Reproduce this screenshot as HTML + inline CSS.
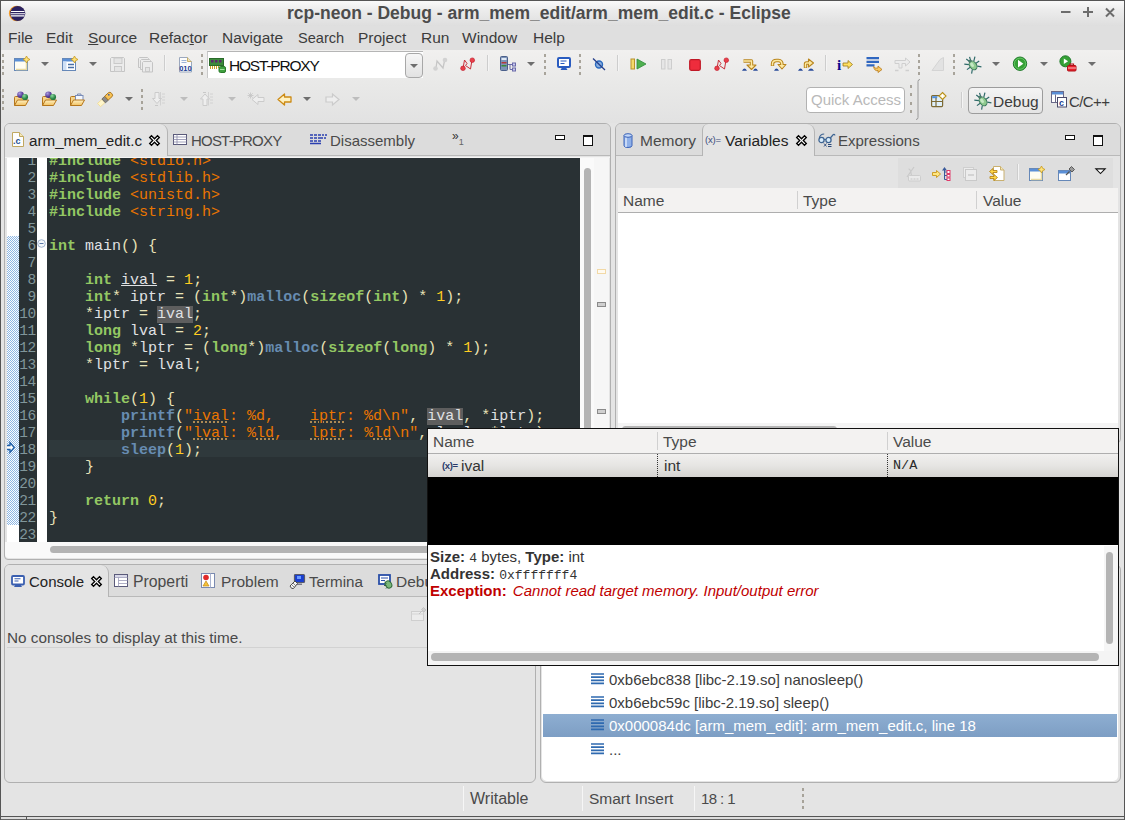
<!DOCTYPE html>
<html><head><meta charset="utf-8"><title>Eclipse</title>
<style>
*{box-sizing:border-box;margin:0;padding:0}
html,body{width:1125px;height:820px;overflow:hidden;background:#e4e4e4;font-family:"Liberation Sans",sans-serif;color:#3c3c3c}
.a{position:absolute}
.t{position:absolute;white-space:nowrap;line-height:1}
#titlebar{left:0;top:0;width:1125px;height:26px;background:linear-gradient(#fbfbfb,#ececec 40%,#dedede)}
#menubar{left:0;top:26px;width:1125px;height:24px;background:#dfdfdf}
.m{font-size:15.5px;top:30px;color:#3c3c3c}
.tab{font-size:15.5px;color:#4a4a4a}
.mono{font-family:"Liberation Mono",monospace}

.dd{position:absolute;width:0;height:0;border-left:4px solid transparent;border-right:4px solid transparent;border-top:4.500px solid #6e6e6e}
.dl{border-top-color:#bdbdbd}
.hd{position:absolute;margin-left:-1px;width:2px;height:22px;background:repeating-linear-gradient(#9c978c 0 3px,transparent 3px 6px);opacity:.85}
.sp{position:absolute;width:1px;height:16px;background:#cdcdcd;box-shadow:1px 0 0 #f4f4f4}
svg{position:absolute;overflow:visible}

.panel{position:absolute;border:1px solid #b0b0b0;border-radius:6px 6px 4px 4px;background:#e4e4e4}
.tabbar{position:absolute;background:#dcdcdc;border-bottom:1px solid #b9b9b9}
.code{position:absolute;left:49px;top:153px;font-family:"Liberation Mono",monospace;font-size:15px;line-height:17px;color:#e0e2e4;white-space:pre}
.code div{height:17px}
.k{color:#93c763;font-weight:bold}.s{color:#ec7600}.n{color:#ffcd22}.o{color:#e8e2b7}.f{color:#678cb1;font-weight:bold}
.oc{background:#5e5e5e}
.ln{position:absolute;left:19px;top:153px;width:17px;font-family:"Liberation Mono",monospace;font-size:14.5px;line-height:17px;color:#81969a;text-align:right;letter-spacing:-0.3px}
.ln div{height:17px}
.sq{text-decoration:underline dotted #d9a860;text-underline-offset:2px}
.hdr{font-size:15.5px;color:#4a4a4a}
</style></head><body>
<!-- window frame -->
<div class="a" id="titlebar"></div>
<div class="t" style="left:287px;top:4.500px;font-size:17.5px;font-weight:bold;color:#4c4c4c">rcp-neon - Debug - arm_mem_edit/arm_mem_edit.c - Eclipse</div>
<svg style="left:8px;top:5px" width="18" height="17" viewBox="0 0 18 17"><circle cx="8.700" cy="8.500" r="7.800" fill="#f49b27"/><circle cx="9.700" cy="8.500" r="7.600" fill="#2c2260"/><path d="M3 6.500h13.500M2.500 8.700h14.500M3 10.900h13.500" stroke="#fff" stroke-width="1.100"/></svg>
<svg style="left:1061px;top:7px" width="54" height="11" viewBox="0 0 54 11"><path d="M0 5h9.500M27 0v10M22 5h10M45 1.500l8 8M53 1.500l-8 8" stroke="#6c6c6c" stroke-width="2" fill="none"/></svg>
<div class="a" id="menubar"></div>
<div class="t m" style="left:8px">File</div>
<div class="t m" style="left:46px">Edit</div>
<div class="t m" style="left:88px"><u>S</u>ource</div>
<div class="t m" style="left:149px">Refac<u>t</u>or</div>
<div class="t m" style="left:222px">Navigate</div>
<div class="t m" style="left:298px;font-size:14.600px;top:30.500px">Search</div>
<div class="t m" style="left:358px">Project</div>
<div class="t m" style="left:421px">Run</div>
<div class="t m" style="left:462px">Window</div>
<div class="t m" style="left:533px">Help</div>
<!--TOOLBAR-->
<div class="a" style="left:1px;top:50px;width:1124px;height:73px;background:linear-gradient(#f1f0ef,#e9e9e8 45%,#e2e2e2)"></div>
<div class="hd" style="left:3px;top:54px"></div>
<svg style="left:14px;top:56px" width="16" height="16" viewBox="0 0 16 16"><rect x=".5" y="2.5" width="13" height="12" fill="#fffdf2" stroke="#6688b8"/><rect x="1" y="3" width="12" height="2.5" fill="#5b8fd6"/><path d="M2 13.5h10.500v-7" fill="none" stroke="#e8d9a0" stroke-width="1.5"/><path d="M12.500 0l1.200 2.300 2.300 1.200-2.300 1.200-1.200 2.300-1.200-2.300-2.300-1.200 2.300-1.200z" fill="#ffe27a" stroke="#c99a1c" stroke-width=".8"/></svg>
<div class="dd" style="left:41px;top:62px"></div>
<svg style="left:62px;top:56px" width="16" height="16" viewBox="0 0 16 16"><rect x=".5" y="2.500" width="13" height="12" fill="#fff" stroke="#6688b8"/><rect x="1" y="3" width="12" height="2.500" fill="#5b8fd6"/><rect x="1" y="5.500" width="3.500" height="8.500" fill="#cfe0f5"/><path d="M6 8.500h6M6 11.500h6" stroke="#4a6fa5" stroke-width="1.300"/><path d="M12.500 0l1.200 2.300 2.300 1.200-2.300 1.200-1.200 2.300-1.200-2.300-2.300-1.200 2.300-1.200z" fill="#ffe27a" stroke="#c99a1c" stroke-width=".8"/></svg>
<div class="dd" style="left:89px;top:62px"></div>
<svg style="left:110px;top:57px" width="16" height="16" viewBox="0 0 16 16"><path d="M1.500 .5h12l1 1v13h-14v-13z" fill="#ececec" stroke="#c4c4c4"/><rect x="4" y="1" width="8" height="5.500" fill="#e4e4e4" stroke="#c9c9c9"/><rect x="4.500" y="9.500" width="7" height="5" fill="#e4e4e4" stroke="#c9c9c9"/></svg>
<svg style="left:138px;top:57px" width="16" height="16" viewBox="0 0 16 16"><path d="M1.500 .5h8l1 1v9h-10v-9z" fill="#ececec" stroke="#c4c4c4"/><path d="M3.500 2.500h8l1 1v9h-10v-9z" fill="#ececec" stroke="#c4c4c4"/><path d="M5.500 4.500h8l1 1v9.500h-10v-9.500z" fill="#ececec" stroke="#c4c4c4"/><rect x="7.500" y="10.500" width="4" height="4" fill="#e4e4e4" stroke="#c9c9c9"/></svg>
<div class="sp" style="left:164px;top:55px"></div>
<svg style="left:178px;top:57px" width="16" height="16" viewBox="0 0 16 16"><path d="M1.500 .5h8l4 4v10.500h-12z" fill="#fcfcfc" stroke="#9aa7bd"/><path d="M9.500 .5v4h4" fill="#f3e3b0" stroke="#c9b06a"/><path d="M3.500 3.500h5M3.500 5.500h5" stroke="#9fb6d8"/><text x="1.200" y="14" font-family="Liberation Sans,sans-serif" font-weight="bold" font-size="7.500" fill="#1c3f94">010</text></svg>
<div class="hd" style="left:202px;top:54px"></div>
<div class="a" style="left:207px;top:51px;width:216px;height:27px;background:#fff;border-top:1px solid #b5b5b5;border-left:1px solid #c8c8c8"></div>
<svg style="left:209px;top:58px" width="17" height="15" viewBox="0 0 17 15"><rect x=".5" y=".5" width="14" height="7" fill="#3c8a3c" stroke="#2a6a2a"/><rect x="2" y="2" width="2.500" height="2.500" fill="#5a2a6a"/><rect x="6" y="2" width="2.500" height="2.500" fill="#5a2a6a"/><rect x="10" y="2" width="2.500" height="2.500" fill="#5a2a6a"/><path d="M1.500 8v3M3.500 8v3M5.500 8v3M7.500 8v3M9.500 8v2" stroke="#c9a227"/><rect x="10" y="8.500" width="6.500" height="6" rx="1.500" fill="#3fa03f" stroke="#2a7a2a"/><path d="M11 11.500h4.500" stroke="#9fe09f"/></svg>
<div class="t" style="left:229px;top:58px;font-size:15.5px;letter-spacing:-1.2px;color:#111">HOST-PROXY</div>
<div class="a" style="left:405px;top:53px;width:18px;height:25px;border:1px solid #a8a8a8;border-radius:4px;background:linear-gradient(#f6f6f6,#e2e2e2)"></div>
<div class="dd" style="left:410px;top:64px"></div>
<svg style="left:433px;top:57px" width="16" height="16" viewBox="0 0 16 16"><path d="M3 11l1-7 6 7 1.500-7" fill="none" stroke="#c6c6c6" stroke-width="1.300"/><circle cx="12" cy="3" r="2.300" fill="#d2d2d2"/><circle cx="2.500" cy="11.500" r="2.300" fill="#d2d2d2"/></svg>
<svg style="left:460px;top:57px" width="16" height="16" viewBox="0 0 16 16"><path d="M3 11.500L4.500 3l2.500 3.500-1.500 2 5 3.500L12 3" fill="none" stroke="#c8303a" stroke-width="1"/><circle cx="12.300" cy="3.200" r="2.300" fill="#e8404a" stroke="#c01828" stroke-width=".6"/><circle cx="3" cy="11.300" r="2.300" fill="#e8404a" stroke="#c01828" stroke-width=".6"/></svg>
<div class="sp" style="left:487px;top:55px"></div>
<svg style="left:500px;top:56px" width="17" height="16" viewBox="0 0 17 16"><rect x=".5" y=".5" width="7" height="14" rx="1" fill="#7d94b8" stroke="#4a5f8a"/><rect x="1.500" y="2" width="5" height="2" fill="#dfe8f5"/><rect x="1.500" y="6" width="5" height="1.500" fill="#b43a3a"/><rect x="1.500" y="9" width="5" height="1.500" fill="#3a8a3a"/><path d="M8 8.500h4M10 8.500v5h2" fill="none" stroke="#6a6aa8"/><rect x="12.500" y="7" width="3" height="3" fill="#c8c8f0" stroke="#6a6aa8"/><rect x="12.500" y="12" width="3" height="3" fill="#c8c8f0" stroke="#6a6aa8"/></svg>
<div class="dd" style="left:527px;top:62px"></div>
<div class="hd" style="left:545px;top:54px"></div>
<svg style="left:557px;top:57px" width="14" height="14" viewBox="0 0 14 14"><rect x="1" y="1" width="12" height="9" rx="1" fill="#fff" stroke="#2a5cc0" stroke-width="2"/><path d="M3.500 4h6M3.500 6.500h4" stroke="#2a5cc0" stroke-width="1.200"/><path d="M5 10.500h4l1.500 2.500h-7z" fill="#2a5cc0"/></svg>
<div class="hd" style="left:580px;top:54px"></div>
<svg style="left:592px;top:57px" width="14" height="14" viewBox="0 0 14 14"><circle cx="7" cy="7.500" r="3.500" fill="#8ab0e0" stroke="#2a6abf" stroke-width="1.400"/><path d="M1 1.500l12 11.500" stroke="#27408b" stroke-width="1.300"/></svg>
<div class="sp" style="left:617px;top:55px"></div>
<svg style="left:630px;top:58px" width="17" height="12" viewBox="0 0 17 12"><rect x="1" y="1" width="3.500" height="10" fill="#f5d96a" stroke="#b8922a"/><path d="M7 1l9 5-9 5z" fill="#4fb04f" stroke="#2f8a3a" stroke-width=".8"/></svg>
<svg style="left:660px;top:58px" width="13" height="12" viewBox="0 0 13 12"><rect x="1.500" y="1.500" width="3.500" height="9.500" fill="#e6e6e6" stroke="#cdcdcd"/><rect x="8" y="1.500" width="3.500" height="9.500" fill="#e6e6e6" stroke="#cdcdcd"/></svg>
<svg style="left:689px;top:59px" width="12" height="12" viewBox="0 0 12 12"><rect x=".7" y=".7" width="10.600" height="10.600" rx="1.500" fill="#ee2c3c" stroke="#c01826" stroke-width="1.200"/></svg>
<svg style="left:714px;top:57px" width="16" height="16" viewBox="0 0 16 16"><path d="M3 11.500L4.500 3l2.500 3.500-1.500 2 5 3.500L12 3" fill="none" stroke="#c8303a" stroke-width="1"/><circle cx="12.300" cy="3.200" r="2.300" fill="#e8404a" stroke="#c01828" stroke-width=".6"/><circle cx="3" cy="11.300" r="2.300" fill="#e8404a" stroke="#c01828" stroke-width=".6"/></svg>
<svg style="left:742px;top:58px" width="17" height="13" viewBox="0 0 17 13"><path d="M1.500 3H9.500V7.500" fill="none" stroke="#b9851c" stroke-width="3.400" stroke-linejoin="round"/><path d="M5 7h9l-4.500 4.500z" fill="#fde9a2" stroke="#b9851c" stroke-width="1.100" stroke-linejoin="round"/><path d="M1.500 3H9.500V8" fill="none" stroke="#fde9a2" stroke-width="1.400"/><path d="M0 12.800q2.500-4.500 5 0zM11 12.800q2.500-4.500 5 0z" fill="#2a4c9a"/></svg>
<svg style="left:770px;top:58px" width="17" height="13" viewBox="0 0 17 13"><path d="M2.500 8V6Q2.500 2.500 6.500 2.500H8.500Q12 2.500 12 6.500" fill="none" stroke="#b9851c" stroke-width="3.400" stroke-linecap="butt"/><path d="M8 6.500h8l-4 4.500z" fill="#fde9a2" stroke="#b9851c" stroke-width="1.100" stroke-linejoin="round"/><path d="M2.500 7.500V6Q2.500 2.500 6.500 2.500H8.500Q12 2.500 12 7" fill="none" stroke="#fde9a2" stroke-width="1.400"/><path d="M4 12.800q2.500-4.500 5 0z" fill="#2a4c9a"/></svg>
<svg style="left:798px;top:58px" width="17" height="13" viewBox="0 0 17 13"><path d="M7.500 10V6Q7.500 5 8.500 5H11" fill="none" stroke="#b9851c" stroke-width="3.400"/><path d="M10.500 1l5 4-5 4z" fill="#fde9a2" stroke="#b9851c" stroke-width="1.100" stroke-linejoin="round"/><path d="M7.500 9.500V6Q7.500 5 8.500 5H11.500" fill="none" stroke="#fde9a2" stroke-width="1.400"/><path d="M0 12.800q2.500-4.500 5 0zM10 12.800q3-4.500 6 0z" fill="#2a4c9a"/></svg>
<div class="sp" style="left:825px;top:55px"></div>
<svg style="left:837px;top:57px" width="17" height="14" viewBox="0 0 17 14"><text x="0" y="12.500" font-family="Liberation Serif,serif" font-weight="bold" font-size="15" fill="#0a0a8c">i</text><path d="M6 6h5v-2.500l4.500 4-4.500 4v-2.500h-5z" fill="#ffe060" stroke="#9a7a1a" stroke-width=".8"/></svg>
<svg style="left:866px;top:56px" width="17" height="16" viewBox="0 0 17 16"><path d="M.5 2.200h12.500M.5 5.800h12.500M.5 9.400h8" stroke="#2f66c0" stroke-width="2.300"/><path d="M7.500 10.500q2 2.500 4.500 1.500v-2l4 3.500-4 3v-2q-3.500 1-4.500-4z" fill="#f8c860" stroke="#b8791a" stroke-width=".8"/></svg>
<svg style="left:894px;top:57px" width="17" height="15" viewBox="0 0 17 15"><path d="M1 3.500h10.500v-2.500l4.500 4-4.500 4v-2.500h-3.500v4.500h-3v-4.500h-4z" fill="#ececec" stroke="#cfcfcf"/><path d="M1 13.500h3.500M11.500 13.500h3.500" stroke="#cfcfcf" stroke-width="1.300"/></svg>
<div class="hd" style="left:919px;top:54px"></div>
<svg style="left:931px;top:57px" width="15" height="15" viewBox="0 0 15 15"><path d="M1 13.500l8-11 3.500-2v13z" fill="#e2e2e2" stroke="#d4d4d4"/></svg>
<div class="hd" style="left:954px;top:54px"></div>
<svg style="left:964px;top:56px" width="17" height="17" viewBox="0 0 17 17"><g transform="rotate(-35 8.500 8.500)"><path d="M2 3.500l3.500 3M15 3.500l-3.500 3M1 9.500h4M16 9.500h-4M2.500 15.500l3-3M14.500 15.500l-3-3M6.500 .5l1.200 3.500M10.500 .5l-1.200 3.500" stroke="#2f6a6a" stroke-width="1.200" fill="none"/><ellipse cx="8.500" cy="9.500" rx="3.400" ry="4.800" fill="#8fca8f" stroke="#3a7a5a"/><ellipse cx="8" cy="8.500" rx="1.500" ry="2.500" fill="#c4e8c4"/><ellipse cx="8.500" cy="4.300" rx="1.800" ry="1.400" fill="#4a7a6a"/></g></svg>
<div class="dd" style="left:992px;top:62px"></div>
<svg style="left:1012px;top:56px" width="16" height="16" viewBox="0 0 16 16"><circle cx="8" cy="7.700" r="6.700" fill="#35a035" stroke="#1f7a2a"/><circle cx="8" cy="7.700" r="5.600" fill="none" stroke="#6fcf6f" stroke-width=".8"/><path d="M6 3.800l5.300 3.900-5.300 3.900z" fill="#fff"/></svg>
<div class="dd" style="left:1040px;top:62px"></div>
<svg style="left:1059px;top:55px" width="18" height="17" viewBox="0 0 18 17"><circle cx="6.400" cy="6.300" r="5.500" fill="#35a035" stroke="#1f7a2a"/><path d="M4.800 3.500l4.300 2.800-4.300 2.800z" fill="#fff"/><rect x="8.500" y="10.500" width="8.500" height="5.500" rx="1" fill="#e8202a" stroke="#b01018"/><path d="M11 10.500v-1.500h3.500v1.500" fill="none" stroke="#b01018" stroke-width="1.200"/><path d="M9 13h8" stroke="#ffd0d0" stroke-width=".9"/></svg>
<div class="dd" style="left:1088px;top:62px"></div>
<!--ROW2-->
<div class="hd" style="left:3px;top:89px"></div>
<svg style="left:13px;top:91px" width="17" height="16" viewBox="0 0 17 16"><defs><linearGradient id="fg" x1="0" y1="0" x2="0" y2="1"><stop offset="0" stop-color="#fff1c4"/><stop offset="1" stop-color="#f1c160"/></linearGradient><radialGradient id="pb" cx=".35" cy=".3" r=".8"><stop offset="0" stop-color="#a99be0"/><stop offset=".6" stop-color="#5a3f9a"/><stop offset="1" stop-color="#3a2870"/></radialGradient><radialGradient id="gb" cx=".35" cy=".3" r=".8"><stop offset="0" stop-color="#8fd8a0"/><stop offset=".6" stop-color="#2f8a4a"/><stop offset="1" stop-color="#1f6a35"/></radialGradient></defs><path d="M1.500 14.500V6.500Q1.500 5.500 2.500 5.500H6L7.500 7H12.500V9.500" fill="#f7d488" stroke="#b5761c"/><path d="M1.500 14.500L4.500 9H15.500L12.500 14.500Z" fill="url(#fg)" stroke="#b5761c" stroke-linejoin="round"/><circle cx="7.500" cy="3.800" r="3.300" fill="url(#pb)"/><circle cx="12" cy="6" r="3.100" fill="url(#gb)"/></svg>
<svg style="left:41px;top:91px" width="17" height="16" viewBox="0 0 17 16"><path d="M1.500 14.500V6.500Q1.500 5.500 2.500 5.500H6L7.500 7H12.500V9.500" fill="#f7d488" stroke="#b5761c"/><path d="M1.500 14.500L4.500 9H15.500L12.500 14.500Z" fill="url(#fg)" stroke="#b5761c" stroke-linejoin="round"/><circle cx="7.500" cy="3.800" r="3.300" fill="url(#pb)"/><circle cx="12" cy="6" r="3.100" fill="url(#gb)"/></svg>
<svg style="left:69px;top:91px" width="17" height="16" viewBox="0 0 17 16"><path d="M1.500 14.500V6.500Q1.500 5.500 2.500 5.500H6L7.500 7H12.500V9.500" fill="#f7d488" stroke="#b5761c"/><rect x="6.500" y="4.500" width="7.500" height="5" fill="#f4f7fd" stroke="#7a8db8"/><path d="M8.500 4.500v-1.500h3.500v1.500" fill="none" stroke="#7a8db8"/><path d="M1.500 14.500L4.500 9H15.500L12.500 14.500Z" fill="url(#fg)" stroke="#b5761c" stroke-linejoin="round"/></svg>
<svg style="left:97px;top:90px" width="17" height="17" viewBox="0 0 17 17"><g transform="translate(0 .5) rotate(-42 8.500 8.500) translate(1 1) scale(.88)"><path d="M-1.500 6.200h7v5h-7z" fill="#fff6cc" stroke="#f0d98a" stroke-width=".8"/><rect x="5.500" y="5.700" width="4.500" height="6" fill="#8a8a8a" stroke="#5a5a5a" stroke-width=".8"/><path d="M10 5.500h6q2 0 2 3t-2 3h-6z" fill="#f7c255" stroke="#a8721a"/><circle cx="14.500" cy="7.500" r=".9" fill="#2a4fa8"/></g></svg>
<div class="dd" style="left:125px;top:97px"></div>
<div class="hd" style="left:142px;top:89px"></div>
<svg style="left:152px;top:91px" width="15" height="16" viewBox="0 0 15 16"><path d="M8.500 1v13.500M10 3h3M10 6h3M10 9h3M10 12h3" stroke="#d2d2d2"/><path d="M3 1.500h4v6h2.500l-4.500 5-4.500-5h2.500z" fill="#eee" stroke="#cbcbcb"/><path d="M3 14.500h3" stroke="#c8c8c8"/></svg>
<div class="dd dl" style="left:180px;top:97px"></div>
<svg style="left:200px;top:91px" width="15" height="16" viewBox="0 0 15 16"><path d="M8.500 1v13.500M10 3h3M10 6h3M10 9h3M10 12h3" stroke="#d2d2d2"/><path d="M3 14.500h4v-6.500h2.500l-4.500-5-4.500 5h2.500z" fill="#eee" stroke="#cbcbcb"/><path d="M3 1.500h3" stroke="#c8c8c8"/></svg>
<div class="dd dl" style="left:228px;top:97px"></div>
<svg style="left:247px;top:92px" width="18" height="14" viewBox="0 0 18 14"><path d="M17 5.500h-6v-3l-6 5 6 5v-3h6z" fill="#eee" stroke="#cbcbcb"/><path d="M3.500 .5v6M.5 3.500h6M1.300 1.300l4.400 4.400M5.700 1.300l-4.400 4.400" stroke="#c4c4c4" stroke-width=".8"/></svg>
<svg style="left:277px;top:93px" width="15" height="13" viewBox="0 0 15 13"><path d="M14 4h-6.500v-3l-6.500 5.500 6.500 5.500v-3h6.500z" fill="#fff1c0" stroke="#cc8a14" stroke-width="1.300" stroke-linejoin="round"/></svg>
<div class="dd" style="left:303px;top:97px"></div>
<svg style="left:325px;top:93px" width="15" height="13" viewBox="0 0 15 13"><path d="M1 4h6.500v-3l6.500 5.500-6.500 5.500v-3h-6.500z" fill="#eee" stroke="#cbcbcb" stroke-width="1.200"/></svg>
<div class="dd dl" style="left:352px;top:97px"></div>
<div class="a" style="left:806px;top:87px;width:99px;height:26px;background:#fff;border:1px solid #b2b2b2;border-radius:4px"></div>
<div class="t" style="left:811px;top:92px;font-size:15px;color:#b9b9b9">Quick Access</div>
<div class="hd" style="left:911px;top:85px;height:29px;background:repeating-linear-gradient(#9c978c 0 3px,transparent 3px 8.300px)"></div>
<svg style="left:915px;top:79px" width="6" height="41" viewBox="0 0 6 41"><path d="M5 .5q-2 0-2 2v36q0 2-2 2" fill="none" stroke="#9a9a9a" stroke-width="1"/></svg>
<svg style="left:931px;top:92px" width="16" height="16" viewBox="0 0 16 16"><rect x=".6" y="3.600" width="11" height="11" rx="1" fill="#dff0fc" stroke="#7d6a35" stroke-width="1.200"/><rect x="1.200" y="4.200" width="5" height="2" fill="#4f8fdf"/><path d="M.6 9.500h11M5 6v8.500" stroke="#7d6a35" stroke-width="1.200"/><path d="M11.500 .5l3.500 3.500-3.500 3.500-3.500-3.500z" fill="#fff6d0" stroke="#b8901c" stroke-width="1.100"/><path d="M11.500 2v4M9.500 4h4" stroke="#fff" stroke-width="1"/></svg>
<div class="sp" style="left:961px;top:92px"></div>
<div class="a" style="left:968px;top:87px;width:75px;height:27px;border:1px solid #9c9c9c;border-radius:4px;background:linear-gradient(#f4f4f4,#e4e4e4)"></div>
<svg style="left:974px;top:92px" width="17" height="17" viewBox="0 0 17 17"><g transform="rotate(-35 8.500 8.500)"><path d="M2 3.500l3.500 3M15 3.500l-3.500 3M1 9.500h4M16 9.500h-4M2.500 15.500l3-3M14.500 15.500l-3-3M6.500 .5l1.200 3.500M10.500 .5l-1.200 3.500" stroke="#2f6a6a" stroke-width="1.200" fill="none"/><ellipse cx="8.500" cy="9.500" rx="3.400" ry="4.800" fill="#8fca8f" stroke="#3a7a5a"/><ellipse cx="8" cy="8.500" rx="1.500" ry="2.500" fill="#c4e8c4"/><ellipse cx="8.500" cy="4.300" rx="1.800" ry="1.400" fill="#4a7a6a"/></g></svg>
<div class="t" style="left:993px;top:94px;font-size:15.500px;color:#3c3c3c">Debug</div>
<svg style="left:1051px;top:91px" width="17" height="17" viewBox="0 0 17 17"><rect x=".5" y=".5" width="12" height="11" fill="#fff" stroke="#6a6a8a"/><rect x="1" y="1" width="11" height="2.500" fill="#5b8fd6"/><path d="M4.500 3.500v8" stroke="#6a6a8a"/><rect x="6.500" y="6.500" width="9" height="9.500" fill="#fff" stroke="#4a4a6a"/><text x="8" y="14.500" font-family="Liberation Sans,sans-serif" font-weight="bold" font-size="9" fill="#1c3f94">c</text></svg>
<div class="t" style="left:1069px;top:94px;font-size:15px;letter-spacing:-.6px;color:#3c3c3c">C/C++</div>


<!--EDITOR-->
<div class="panel" style="left:4px;top:123px;width:607px;height:437px"></div>
<div class="tabbar" style="left:5px;top:124px;width:605px;height:32px;border-radius:5px 5px 0 0"></div>
<div class="a" style="left:5px;top:124px;width:163px;height:32px;background:#e4e4e4;border-right:1px solid #b4b4b4;border-radius:5px 8px 0 0"></div>
<svg style="left:12px;top:132px" width="12" height="15" viewBox="0 0 12 15"><path d="M.5 .5h7l4 4v10h-11z" fill="#fdfdfd" stroke="#c0a860"/><path d="M7.500 .5v4h4" fill="#f5e8b8" stroke="#c0a860"/><text x="1" y="12" font-family="Liberation Sans,sans-serif" font-weight="bold" font-size="9" fill="#1c4f94">.c</text></svg>
<div class="t tab" style="left:29px;top:133px;font-size:15.2px;color:#222">arm_mem_edit.c</div>
<svg style="left:149px;top:135px" width="11" height="11" viewBox="0 0 11 11"><path d="M.7 2.500L2.500 .7 5.500 3.700 8.500 .7 10.300 2.500 7.300 5.500 10.300 8.500 8.500 10.300 5.500 7.300 2.500 10.300 .7 8.500 3.700 5.500z" fill="#fff" stroke="#000" stroke-width="1.350"/></svg>
<svg style="left:173px;top:134px" width="14" height="11" viewBox="0 0 14 11"><rect x=".5" y=".5" width="13" height="10" fill="#fff" stroke="#5a5a7a"/><path d="M.5 3h13M.5 5.500h13M.5 8h13M4 .5v10" stroke="#8a8aaa" stroke-width=".8"/></svg>
<div class="t tab" style="left:191px;top:133px;font-size:15px;letter-spacing:-.8px">HOST-PROXY</div>
<svg style="left:310px;top:134px" width="17" height="10" viewBox="0 0 17 10"><path d="M0 1h3M4 1h3M8 1h3M12 1h2M15 1h2M0 4h3M4 4h3M8 4h5M14 4h2M0 7h3M4 7h3M8 7h3M0 9.500h11" stroke="#2a3fb0" stroke-width="1.400"/></svg>
<div class="t tab" style="left:330px;top:133px;font-size:15px">Disassembly</div>
<div class="t" style="left:452px;top:130px;font-size:12px;color:#333">»<span style="font-size:9px;position:relative;top:5px;color:#666">1</span></div>
<div class="a" style="left:555px;top:135px;width:10px;height:5px;border:1.500px solid #111;background:#fff"></div>
<div class="a" style="left:583px;top:135px;width:10px;height:11px;border:1.400px solid #111;border-top-width:2.500px;background:#fff"></div>
<div class="a" style="left:5px;top:157px;width:605px;height:1px;background:#f4f4f4"></div>
<div class="a" style="left:7px;top:158px;width:12px;height:384px;background:#fff"></div>
<div class="a" style="left:7px;top:236px;width:12px;height:289px;background:#c5daf0;background-image:repeating-conic-gradient(#8fb7e3 0 25%,#fbfdff 0 50%);background-size:2px 2px"></div>
<div class="a" style="left:19px;top:158px;width:561px;height:384px;background:#293134"></div>
<div class="a" style="left:37px;top:158px;width:10px;height:384px;background:#fff"></div>
<div class="a" style="left:49px;top:440px;width:531px;height:17px;background:#2f393c"></div>
<div class="a" style="left:19px;top:158px;width:561px;height:384px;overflow:hidden"><div style="position:absolute;left:-19px;top:-158px">
<div class="ln"><div>1</div><div>2</div><div>3</div><div>4</div><div>5</div><div>6</div><div>7</div><div>8</div><div>9</div><div>10</div><div>11</div><div>12</div><div>13</div><div>14</div><div>15</div><div>16</div><div>17</div><div>18</div><div>19</div><div>20</div><div>21</div><div>22</div><div>23</div></div>
<div class="code"><div><span class="k">#include</span> <span class="s">&lt;stdio.h&gt;</span></div><div><span class="k">#include</span> <span class="s">&lt;stdlib.h&gt;</span></div><div><span class="k">#include</span> <span class="s">&lt;unistd.h&gt;</span></div><div><span class="k">#include</span> <span class="s">&lt;string.h&gt;</span></div><div></div><div><span class="k">int</span> main<span class="o">()</span> <span class="o">{</span></div><div></div><div>    <span class="k">int</span> <u>ival</u> <span class="o">=</span> <span class="n">1</span><span class="o">;</span></div><div>    <span class="k">int</span><span class="o">*</span> iptr <span class="o">=</span> <span class="o">(</span><span class="k">int</span><span class="o">*)</span><span class="f">malloc</span><span class="o">(</span><span class="k">sizeof</span><span class="o">(</span><span class="k">int</span><span class="o">)</span> <span class="o">*</span> <span class="n">1</span><span class="o">);</span></div><div>    <span class="o">*</span>iptr <span class="o">=</span> <span class="oc">ival</span><span class="o">;</span></div><div>    <span class="k">long</span> lval <span class="o">=</span> <span class="n">2</span><span class="o">;</span></div><div>    <span class="k">long</span> <span class="o">*</span>lptr <span class="o">=</span> <span class="o">(</span><span class="k">long</span><span class="o">*)</span><span class="f">malloc</span><span class="o">(</span><span class="k">sizeof</span><span class="o">(</span><span class="k">long</span><span class="o">)</span> <span class="o">*</span> <span class="n">1</span><span class="o">);</span></div><div>    <span class="o">*</span>lptr <span class="o">=</span> lval<span class="o">;</span></div><div></div><div>    <span class="k">while</span><span class="o">(</span><span class="n">1</span><span class="o">)</span> <span class="o">{</span></div><div>        <span class="f">printf</span><span class="o">(</span><span class="s">"<span class="sq">ival</span>: %d,    <span class="sq">iptr</span>: %d\n"</span><span class="o">,</span> <span class="oc">ival</span><span class="o">,</span> <span class="o">*</span>iptr<span class="o">);</span></div><div>        <span class="f">printf</span><span class="o">(</span><span class="s">"<span class="sq">lval</span>: %<span class="sq">ld</span>,   <span class="sq">lptr</span>: %<span class="sq">ld</span>\n"</span><span class="o">,</span> lval<span class="o">,</span> <span class="o">*</span>lptr<span class="o">);</span></div><div>        <span class="f">sleep</span><span class="o">(</span><span class="n">1</span><span class="o">);</span></div><div>    <span class="o">}</span></div><div></div><div>    <span class="k">return</span> <span class="n">0</span><span class="o">;</span></div><div><span class="o">}</span></div><div></div></div>
</div></div>
<svg style="left:37px;top:239px" width="9" height="9" viewBox="0 0 9 9"><circle cx="4.500" cy="4.500" r="3.800" fill="#f4f7fb" stroke="#9fb3cf"/><path d="M2.500 4.500h4" stroke="#5a78a8"/></svg>
<div class="a" style="left:7px;top:440px;width:9px;height:15px;overflow:hidden"><svg style="left:0;top:0" width="9" height="15" viewBox="0 0 9 15"><path d="M-4 5.500h7v-3l4.200 5-4.200 5v-3h-7z" fill="#fff" stroke="#1f5fa8" stroke-width="1.300"/></svg></div>
<div class="a" style="left:580px;top:158px;width:14px;height:384px;background:#fafafa"></div>
<div class="a" style="left:584px;top:168px;width:7px;height:372px;background:#b4b4b4;border-radius:4px"></div>
<div class="a" style="left:594px;top:158px;width:15px;height:384px;background:#f6f6f6"></div>
<div class="a" style="left:597px;top:269px;width:9px;height:5px;border:1px solid #f2d9a6;background:#fffaf0"></div>
<div class="a" style="left:597px;top:302px;width:9px;height:5px;border:1px solid #8a8a8a;background:#cfcfcf"></div>
<div class="a" style="left:597px;top:409px;width:9px;height:5px;border:1px solid #8a8a8a;background:#cfcfcf"></div>
<div class="a" style="left:5px;top:542px;width:605px;height:16px;background:#f9f9f9;border-radius:0 0 4px 4px"></div>
<div class="a" style="left:50px;top:546px;width:480px;height:7px;background:#b4b4b4;border-radius:4px"></div>

<!--RIGHT-->
<div class="panel" style="left:615px;top:123px;width:506px;height:320px"></div>
<div class="tabbar" style="left:616px;top:124px;width:504px;height:32px;border-radius:5px 5px 0 0"></div>
<div class="a" style="left:702px;top:124px;width:113px;height:32px;background:#e4e4e4;border-left:1px solid #b4b4b4;border-right:1px solid #b4b4b4;border-radius:6px 8px 0 0"></div>
<svg style="left:623px;top:133px" width="10" height="15" viewBox="0 0 10 15"><path d="M1 2.500v10q0 2 4 2t4-2v-10" fill="#8fb0e8" stroke="#3a62b8"/><path d="M3 3.500v10.500" stroke="#dbe7fb" stroke-width="1.500"/><ellipse cx="5" cy="2.500" rx="4" ry="1.800" fill="#c4d8f8" stroke="#3a62b8"/></svg>
<div class="t tab" style="left:640px;top:133px">Memory</div>
<div class="t" style="left:705px;top:135px;font-size:9.5px;color:#3a4a7a;letter-spacing:-.2px">(x)=</div>
<div class="t tab" style="left:725px;top:133px;color:#222">Variables</div>
<svg style="left:796px;top:135px" width="11" height="11" viewBox="0 0 11 11"><path d="M.7 2.500L2.500 .7 5.500 3.700 8.500 .7 10.300 2.500 7.300 5.500 10.300 8.500 8.500 10.300 5.500 7.300 2.500 10.300 .7 8.500 3.700 5.500z" fill="#fff" stroke="#000" stroke-width="1.350"/></svg>
<svg style="left:818px;top:133px" width="18" height="14" viewBox="0 0 18 14"><circle cx="3.500" cy="7" r="2.600" fill="#d8ecfa" stroke="#3f6593" stroke-width="1.300"/><circle cx="10.500" cy="7" r="2.600" fill="#d8ecfa" stroke="#3f6593" stroke-width="1.300"/><path d="M6 6.500h2M1.200 5.500q.8-4.500 5-4.500M12.300 5l3-3.500q1.500-.5 1.500 1" fill="none" stroke="#3f6593" stroke-width="1.200"/><path d="M6 10.500l2.500 3M8.500 10.500l-2.500 3" stroke="#2a4a7a" stroke-width=".9"/><path d="M10 11.500h3.500M10 13.500h3.500" stroke="#2a4a7a" stroke-width="1"/></svg>
<div class="t tab" style="left:838px;top:133px;font-size:15px">Expressions</div>
<div class="a" style="left:1065px;top:135px;width:10px;height:5px;border:1.500px solid #111;background:#fff"></div>
<div class="a" style="left:1093px;top:135px;width:10px;height:11px;border:1.400px solid #111;border-top-width:2.500px;background:#fff"></div>
<div class="a" style="left:898px;top:158px;width:215px;height:30px;background:#dedede"></div>
<svg style="left:905px;top:166px" width="17" height="16" viewBox="0 0 17 16"><path d="M2 11l7-10M3.500 3q2 0 2.500 4t2.500 4" fill="none" stroke="#c9c9c9" stroke-width="1.200"/><rect x="3.500" y="9.500" width="12" height="5.500" rx="1" fill="#eaeaea" stroke="#cdcdcd"/><path d="M5.500 13h2M8.500 13h2M11.500 13h2" stroke="#c4c4c4"/></svg>
<svg style="left:932px;top:167px" width="19" height="14" viewBox="0 0 19 14"><path d="M.5 5.500h4v-2l4 3.500-4 3.500v-2h-4z" fill="#ffe680" stroke="#c9971a" stroke-width=".9"/><path d="M12.500 3v9.500h3M12.500 5h3M12.500 8.500h3" fill="none" stroke="#3a5a9a"/><path d="M12.500 0l2.500 3.500h-5z" fill="#3a5a9a"/><rect x="15" y="3.500" width="3" height="3" fill="#fff" stroke="#e03a6a"/><rect x="15" y="7.500" width="3" height="2.500" fill="#fff" stroke="#e03a6a"/><rect x="15" y="11" width="3" height="2.500" fill="#fff" stroke="#e03a6a"/></svg>
<svg style="left:963px;top:167px" width="14" height="14" viewBox="0 0 14 14"><rect x=".5" y=".5" width="10" height="10" fill="#ececec" stroke="#cfcfcf"/><rect x="2.500" y="2.500" width="11" height="11" fill="#ececec" stroke="#c9c9c9"/><path d="M5 8h6" stroke="#c4c4c4" stroke-width="1.200"/></svg>
<svg style="left:989px;top:166px" width="16" height="15" viewBox="0 0 16 15"><path d="M4.500 .5h7l3.500 3.500v10.500h-10.500z" fill="#fff" stroke="#c9b070"/><path d="M11.500 .5v3.500h3.500" fill="#f5e8b8" stroke="#c9b070"/><path d="M8 4.500h-4v-2l-3.500 3 3.500 3v-2h4zM1 10.500h4v-2l3.500 3-3.500 3v-2h-4z" fill="#ffd84a" stroke="#b8861a" stroke-width=".9"/></svg>
<div class="sp" style="left:1017px;top:164px"></div>
<svg style="left:1029px;top:166px" width="17" height="15" viewBox="0 0 17 15"><rect x=".5" y="2.500" width="13" height="12" fill="#fffdf2" stroke="#6688b8"/><rect x="1" y="3" width="12" height="2.500" fill="#5b8fd6"/><path d="M2 13.500h10.500v-7" fill="none" stroke="#e8d9a0" stroke-width="1.500"/><path d="M12.500 0l1.200 2.300 2.300 1.200-2.300 1.200-1.200 2.300-1.200-2.300-2.300-1.200 2.300-1.200z" fill="#ffe27a" stroke="#c99a1c" stroke-width=".8"/></svg>
<svg style="left:1058px;top:166px" width="17" height="15" viewBox="0 0 17 15"><rect x=".5" y="4.500" width="12" height="10" fill="#fff" stroke="#6688b8"/><rect x="1" y="5" width="11" height="2.500" fill="#5b8fd6"/><path d="M8 9l3.500-3.500" stroke="#555" stroke-width="1.200"/><path d="M11 3l2.500-2.500 3 3-2.500 2.500z" fill="#9a9a9a" stroke="#5a5a5a"/></svg>
<svg style="left:1095px;top:168px" width="11" height="6.500" viewBox="0 0 13 7"><path d="M1 .7h11l-5.500 5.500z" fill="#fff" stroke="#111" stroke-width="1.300"/></svg>
<div class="a" style="left:618px;top:188px;width:500px;height:25px;background:#f3f2f1;border-bottom:1px solid #aeaeae"></div>
<div class="t hdr" style="left:623px;top:193px">Name</div>
<div class="t hdr" style="left:803px;top:193px">Type</div>
<div class="t hdr" style="left:983px;top:193px">Value</div>
<div class="a" style="left:797px;top:191px;width:1px;height:18px;background:#d0d0d0"></div>
<div class="a" style="left:976px;top:191px;width:1px;height:18px;background:#d0d0d0"></div>
<div class="a" style="left:618px;top:213px;width:500px;height:210px;background:#fff"></div>
<div class="a" style="left:618px;top:423px;width:500px;height:12px;background:#f4f4f4"></div>
<div class="a" style="left:622px;top:426px;width:215px;height:7px;background:#b4b4b4;border-radius:4px"></div>

<!--BOTTOM-->
<div class="panel" style="left:4px;top:564px;width:532px;height:219px;border-radius:6px"></div>
<div class="tabbar" style="left:5px;top:565px;width:530px;height:32px;border-radius:5px 5px 0 0"></div>
<div class="a" style="left:5px;top:565px;width:104px;height:32px;background:#e4e4e4;border-right:1px solid #b4b4b4;border-radius:5px 8px 0 0"></div>
<svg style="left:11px;top:575px" width="14" height="13" viewBox="0 0 14 13"><rect x="1" y="1" width="12" height="8.500" rx="1" fill="#fff" stroke="#3a5fb0" stroke-width="1.800"/><path d="M3.500 3.800h6M3.500 6h4" stroke="#3a5fb0" stroke-width="1.100"/><path d="M4.500 9.500h5l1.500 2.500h-8z" fill="#3a5fb0"/></svg>
<div class="t tab" style="left:29px;top:574px;font-size:15px;color:#222">Console</div>
<svg style="left:90.500px;top:575.500px" width="11" height="11" viewBox="0 0 11 11"><path d="M.7 2.500L2.500 .7 5.500 3.700 8.500 .7 10.300 2.500 7.300 5.500 10.300 8.500 8.500 10.300 5.500 7.300 2.500 10.300 .7 8.500 3.700 5.500z" fill="#fff" stroke="#000" stroke-width="1.350"/></svg>
<svg style="left:114px;top:574px" width="14" height="13" viewBox="0 0 14 13"><rect x=".5" y=".5" width="13" height="12" fill="#fff" stroke="#5a5a7a"/><path d="M.5 3.500h13M4.500 3.500v9M4.500 6.500h9M4.500 9.500h9" stroke="#9a9ab8" stroke-width=".8"/><rect x="1" y="1" width="12" height="2" fill="#d8d8e8"/></svg>
<div class="t tab" style="left:133px;top:574px;font-size:15.800px">Properti</div>
<svg style="left:201px;top:573px" width="14" height="15" viewBox="0 0 14 15"><rect x=".5" y=".5" width="13" height="14" fill="#fff" stroke="#7a8ab0"/><path d="M9.500 .5v14" stroke="#aab4d0"/><circle cx="5" cy="4.500" r="2.800" fill="#e02a2a"/><path d="M5 8l3 5h-6z" fill="#f6c23a" stroke="#c08a12" stroke-width=".7"/></svg>
<div class="t tab" style="left:221px;top:574px">Problem</div>
<svg style="left:289px;top:574px" width="17" height="16" viewBox="0 0 17 16"><rect x="5.500" y=".5" width="10" height="8" rx="1" fill="#1a3fd0" stroke="#5a5a6a" stroke-width="1.200"/><rect x="8" y="2" width="4" height="3" fill="#6a9aff"/><path d="M8 9.500h5v1.500h-5z" fill="#7a7a8a"/><path d="M1 12l5-5 2.500 2.500-4 5q-2 1-3.500-2.500z" fill="#f4f4f4" stroke="#4a4a4a"/><path d="M2.500 10.500l3 3M4 9l3 3" stroke="#6a6a6a" stroke-width=".8"/></svg>
<div class="t tab" style="left:309px;top:574px;font-size:15.2px">Termina</div>
<svg style="left:378px;top:574px" width="15" height="15" viewBox="0 0 15 15"><rect x="1" y="1" width="11" height="9" fill="#fff" stroke="#2a4fa8" stroke-width="1.800"/><path d="M3 4h7M3 6.500h4" stroke="#2a4fa8"/><ellipse cx="10.500" cy="10.500" rx="3" ry="3.800" fill="#7ab87a" stroke="#2f6a3a" transform="rotate(-35 10.500 10.500)"/><path d="M6.500 8l2 1.500M6 11.500h2.500M8 14.500l1.500-1.500" stroke="#2f5a3a" stroke-width=".9"/></svg>
<div class="t tab" style="left:396px;top:574px">Debug</div>
<svg style="left:411px;top:607px" width="15" height="14" viewBox="0 0 15 14"><rect x=".5" y="4.500" width="12" height="9" fill="#ececec" stroke="#cfcfcf"/><path d="M.5 7h12" stroke="#d4d4d4"/><path d="M8 7l3-3M10.500 2.500l2-2 2.500 2.500-2 2z" fill="#d0d0d0" stroke="#c4c4c4"/></svg>
<div class="t" style="left:7px;top:630px;font-size:15.3px;color:#4a4a4a">No consoles to display at this time.</div>
<div class="a" style="left:7px;top:647px;width:526px;height:1px;background:#d2d2d2"></div>
<div class="panel" style="left:540px;top:564px;width:581px;height:219px;border-radius:6px;background:#e4e4e4"></div>
<div class="a" style="left:542px;top:600px;width:576px;height:181px;background:#fff;border-radius:0 0 5px 5px"></div>
<div class="a" style="left:543px;top:714px;width:574px;height:23px;background:linear-gradient(#8eaed1,#7d9ec4)"></div>
<svg style="left:591px;top:673px" width="12" height="11" viewBox="0 0 12 11"><path d="M0 1h13M0 4.200h13M0 7.400h13M0 10.300h13" stroke="#2f6ab0" stroke-width="1.700"/></svg>
<svg style="left:591px;top:696px" width="12" height="11" viewBox="0 0 12 11"><path d="M0 1h13M0 4.200h13M0 7.400h13M0 10.300h13" stroke="#2f6ab0" stroke-width="1.700"/></svg>
<svg style="left:591px;top:719px" width="12" height="11" viewBox="0 0 12 11"><path d="M0 1h13M0 4.200h13M0 7.400h13M0 10.300h13" stroke="#2f6ab0" stroke-width="1.700"/></svg>
<svg style="left:591px;top:743px" width="12" height="11" viewBox="0 0 12 11"><path d="M0 1h13M0 4.200h13M0 7.400h13M0 10.300h13" stroke="#2f6ab0" stroke-width="1.700"/></svg>
<div class="t" style="left:609px;top:672px;font-size:15px;color:#3c3c3c">0xb6ebc838 [libc-2.19.so] nanosleep()</div>
<div class="t" style="left:609px;top:695px;font-size:15px;color:#3c3c3c">0xb6ebc59c [libc-2.19.so] sleep()</div>
<div class="t" style="left:609px;top:718px;font-size:15px;color:#fff">0x000084dc [arm_mem_edit]: arm_mem_edit.c, line 18</div>
<div class="t" style="left:609px;top:742px;font-size:15px;color:#3c3c3c">...</div>

<!--POPUP-->
<div class="a" style="left:427px;top:428px;width:692px;height:238px;background:#fff;border:1px solid #111"></div>
<div class="a" style="left:428px;top:429px;width:690px;height:25px;background:#f3f2f1;border-bottom:1px solid #aeaeae"></div>
<div class="t hdr" style="left:433px;top:434px">Name</div>
<div class="t hdr" style="left:663px;top:434px">Type</div>
<div class="t hdr" style="left:893px;top:434px">Value</div>
<div class="a" style="left:657px;top:432px;width:1px;height:18px;background:#d0d0d0"></div>
<div class="a" style="left:887px;top:432px;width:1px;height:18px;background:#d0d0d0"></div>
<div class="a" style="left:428px;top:454px;width:690px;height:23px;background:linear-gradient(#f1f0ef,#e6e5e3 50%,#d5d3d0)"></div>
<div class="a" style="left:657px;top:454px;width:0;height:23px;border-left:1px dotted #333"></div>
<div class="a" style="left:887px;top:454px;width:0;height:23px;border-left:1px dotted #333"></div>
<div class="t" style="left:442px;top:461px;font-size:9.5px;color:#2a3a6a;letter-spacing:-.4px;font-weight:bold">(x)=</div>
<div class="t hdr" style="left:461px;top:458px;color:#333">ival</div>
<div class="t hdr" style="left:664px;top:458px;color:#333">int</div>
<div class="t mono" style="left:893px;top:459px;font-size:13.500px;color:#2a2a2a">N/A</div>
<div class="a" style="left:428px;top:477px;width:690px;height:68px;background:#000"></div>
<div class="t" style="left:430px;top:549px;font-size:15px;color:#333"><b>Size:</b> <span class="mono" style="font-size:13px">4</span> bytes, <b>Type:</b> int</div>
<div class="t" style="left:430px;top:566px;font-size:15px;color:#333"><b>Address:</b> <span class="mono" style="font-size:13px">0xfffffff4</span></div>
<div class="t" style="left:430px;top:583px;font-size:15px;color:#c00000"><b>Exception:</b> <i style="margin-left:2px">Cannot read target memory. Input/output error</i></div>
<div class="a" style="left:1104px;top:546px;width:14px;height:105px;background:#f6f6f6"></div>
<div class="a" style="left:1106px;top:552px;width:7px;height:92px;background:#b4b4b4;border-radius:4px"></div>
<div class="a" style="left:428px;top:651px;width:690px;height:14px;background:#f4f4f4"></div>
<div class="a" style="left:431px;top:653px;width:668px;height:8px;background:#b4b4b4;border-radius:4px"></div>

<!--STATUS-->
<div class="a" style="left:463px;top:786px;width:1px;height:25px;background:#f6f6f6"></div>
<div class="t" style="left:470px;top:791px;font-size:16px;color:#4a4a4a">Writable</div>
<div class="a" style="left:582px;top:786px;width:1px;height:25px;background:#f6f6f6"></div>
<div class="t" style="left:589px;top:791px;font-size:15.500px;color:#4a4a4a">Smart Insert</div>
<div class="a" style="left:694px;top:786px;width:1px;height:25px;background:#f6f6f6"></div>
<div class="t" style="left:701px;top:791px;font-size:15px;letter-spacing:-.6px;color:#4a4a4a">18 : 1</div>
<div class="hd" style="left:803px;top:788px;height:24px"></div>
<div class="a" style="left:0;top:816px;width:1125px;height:1px;background:#555"></div>
<div class="a" style="left:0;top:817px;width:1125px;height:3px;background:#dcdcdc"></div>
<div class="a" style="left:0;top:819px;width:1125px;height:1px;background:#666"></div>
<div class="a" style="left:26px;top:816px;width:1px;height:4px;background:#555"></div>

<div class="a" style="left:0;top:0;width:1px;height:820px;background:#555"></div><div class="a" style="left:0;top:0;width:1125px;height:1px;background:#555"></div><div class="a" style="left:1124px;top:0;width:1px;height:820px;background:#555"></div>
</body></html>
